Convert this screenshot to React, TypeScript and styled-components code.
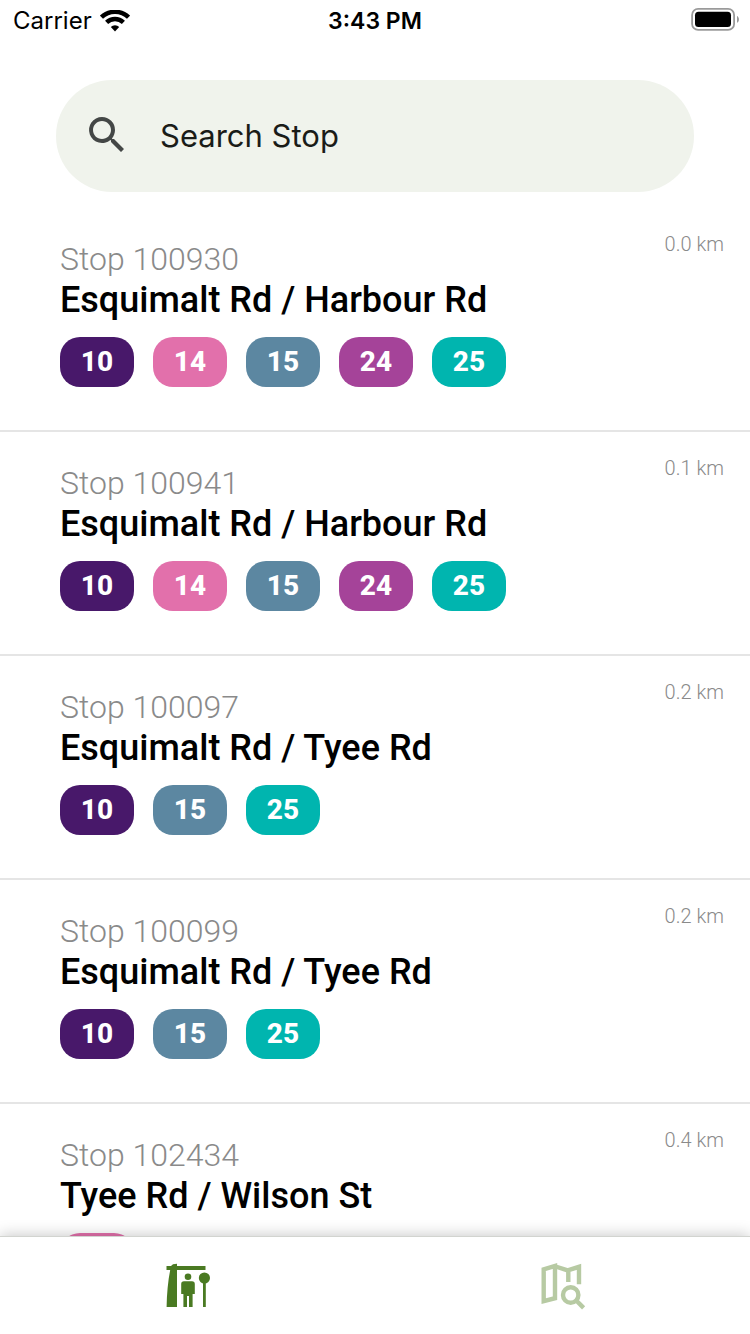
import React from "react";
import styled, { createGlobalStyle } from "styled-components";

const GlobalStyle = createGlobalStyle`
  * { box-sizing: border-box; }
  body { margin: 0; background: #fff; }
`;

const Screen = styled.div`
  display: flex;
  flex-direction: column;
  height: 100vh;
  background: #fff;
  color: #000;
  font-family: Roboto, sans-serif;
`;

const StatusBar = styled.header`
  display: grid;
  grid-template-columns: 1fr auto 1fr;
  align-items: center;
  height: 42px;
  padding: 0 10px;
  font: 400 24px/40px Inter, sans-serif;
`;

const Signal = styled.div`
  display: flex;
  align-items: center;
  gap: 8px;
  padding-left: 3px;
`;

const Clock = styled.time`
  font-weight: 600;
  font-size: 23px;
`;

const Battery = styled.svg`
  justify-self: end;
`;

const SearchBar = styled.label`
  display: flex;
  flex: none;
  align-items: center;
  gap: 29px;
  height: 112px;
  margin: 38px 56px 16px;
  padding: 0 27px;
  border-radius: 56px;
  background: #f0f3ec;
`;

const SearchInput = styled.input`
  flex: 1;
  min-width: 0;
  padding: 0;
  border: 0;
  outline: 0;
  background: transparent;
  color: #1a1c18;
  font: 400 31px/40px Inter, sans-serif;
  &::placeholder { color: #1a1c18; opacity: 1; }
`;

const StopList = styled.ul`
  flex: 1;
  min-height: 0;
  margin: 0;
  padding: 0;
  overflow-y: auto;
  scrollbar-width: none;
  list-style: none;
`;

const StopItem = styled.li`
  display: flex;
  justify-content: space-between;
  padding: 24px 26px 43px 60px;
  border-bottom: 2px solid #e5e5e5;
`;

const StopCode = styled.p`
  margin: 6px 0 0;
  color: #8a8a8a;
  font-weight: 300;
  font-size: 32px;
  line-height: 42px;
`;

const StopName = styled.h2`
  margin: 0;
  font-weight: 500;
  font-size: 36px;
  line-height: 40px;
`;

const Routes = styled.div`
  display: flex;
  gap: 19px;
  margin-top: 17px;
`;

const RouteBadge = styled.span<{ $color: string }>`
  width: 74px;
  height: 50px;
  border-radius: 20px;
  background: ${(p) => p.$color};
  color: #fff;
  font-weight: 800;
  font-size: 28px;
  line-height: 50px;
  text-align: center;
`;

const Distance = styled.span`
  color: #8a8a8a;
  font-weight: 300;
  font-size: 20px;
  line-height: 24px;
`;

const TabBar = styled.nav`
  position: relative;
  display: flex;
  flex: none;
  height: 97px;
  background: #fff;
  box-shadow: 0 -1px 0 #d2d4d0, 0 -2px 14px rgba(0, 0, 0, 0.22);
`;

const Tab = styled.button`
  display: flex;
  flex: 1;
  justify-content: center;
  padding: 25px 0 0;
  border: 0;
  background: transparent;
`;

const routeColors: Record<string, string> = {
  "10": "#48186a",
  "14": "#e270ab",
  "15": "#5c87a1",
  "24": "#a54399",
  "25": "#00b5af",
};

const stops = [
  { code: "100930", name: "Esquimalt Rd / Harbour Rd", distance: "0.0 km", routes: ["10", "14", "15", "24", "25"] },
  { code: "100941", name: "Esquimalt Rd / Harbour Rd", distance: "0.1 km", routes: ["10", "14", "15", "24", "25"] },
  { code: "100097", name: "Esquimalt Rd / Tyee Rd", distance: "0.2 km", routes: ["10", "15", "25"] },
  { code: "100099", name: "Esquimalt Rd / Tyee Rd", distance: "0.2 km", routes: ["10", "15", "25"] },
  { code: "102434", name: "Tyee Rd / Wilson St", distance: "0.4 km", routes: ["14"] },
];

const WifiIcon = () => (
  <svg width="30" height="22" viewBox="0 1 30 22" fill="none" stroke="#000" strokeWidth="4.4" aria-hidden="true">
    <path d="M1.5 8.2A19.5 19.5 0 0 1 28.5 8.2" />
    <path d="M6.6 13.4A12 12 0 0 1 23.4 13.4" />
    <path d="M10.8 18a6 6 0 0 1 8.4 0L15 22.4z" fill="#000" stroke="none" />
  </svg>
);

const BatteryIcon = () => (
  <Battery width="50" height="26" viewBox="0 1 50 26" role="img" aria-label="Battery full">
    <rect x="2.1" y="1.9" width="42" height="21" rx="6" fill="none" stroke="#9a9a9a" strokeWidth="1.8" />
    <rect x="5" y="4.7" width="36" height="15.4" rx="3.5" />
    <path d="M47 9c2.6 1.2 2.6 5.6 0 6.8z" fill="#9a9a9a" />
  </Battery>
);

const SearchIcon = () => (
  <svg width="48" height="48" viewBox="0 0.5 24 24" fill="#444746" aria-hidden="true">
    <path d="M9.5 3A6.5 6.5 0 0 1 16 9.5c0 1.61-.59 3.09-1.56 4.23l.27.27h.79l5 5-1.5 1.5-5-5v-.79l-.27-.27A6.5 6.5 0 1 1 9.5 3m0 2C7 5 5 7 5 9.5S7 14 9.5 14 14 12 14 9.5 12 5 9.5 5" />
  </svg>
);

const ShelterIcon = () => (
  <svg width="48" height="48" viewBox="0 0 48 48" fill="#4a7a22" aria-hidden="true">
    <path d="M2.5 4H7L9 2.2l4-.4V4h28.5v4H13v37H2.6C2.8 32 4 19 6.2 8H2.5z" />
    <circle cx="24" cy="14.7" r="3.3" />
    <path d="M20 19.3h8a2.8 2.8 0 0 1 2.8 2.8V32h-2.2v13H25V34h-2v11h-3.6V32h-2.2v-9.9a2.8 2.8 0 0 1 2.8-2.8z" />
    <circle cx="40.4" cy="16" r="5.6" />
    <path d="M39 20h2.8v25H39z" />
  </svg>
);

const MapSearchIcon = () => (
  <svg width="48" height="48" viewBox="0 0 48 48" fill="none" stroke="#b7caa3" strokeWidth="4.4" aria-hidden="true">
    <path d="M4.7 7.4L16 4v32.2L4.7 39.2z" />
    <path d="M15 4l13.7 4.4L40 4.8v17.5M29.3 8v12" />
    <circle cx="31.7" cy="33" r="7.7" />
    <path d="M37 38.3l7.6 7.6" />
  </svg>
);

export default function App() {
  return (
    <Screen>
      <GlobalStyle />
      <StatusBar>
        <Signal>
          Carrier
          <WifiIcon />
        </Signal>
        <Clock>3:43 PM</Clock>
        <BatteryIcon />
      </StatusBar>
      <SearchBar>
        <SearchIcon />
        <SearchInput type="text" placeholder="Search Stop" aria-label="Search Stop" />
      </SearchBar>
      <StopList>
        {stops.map((stop) => (
          <StopItem key={stop.code}>
            <div>
              <StopCode>Stop {stop.code}</StopCode>
              <StopName>{stop.name}</StopName>
              <Routes>
                {stop.routes.map((route) => (
                  <RouteBadge key={route} $color={routeColors[route]}>{route}</RouteBadge>
                ))}
              </Routes>
            </div>
            <Distance>{stop.distance}</Distance>
          </StopItem>
        ))}
      </StopList>
      <TabBar>
        <Tab type="button" aria-label="Stops"><ShelterIcon /></Tab>
        <Tab type="button" aria-label="Map"><MapSearchIcon /></Tab>
      </TabBar>
    </Screen>
  );
}
